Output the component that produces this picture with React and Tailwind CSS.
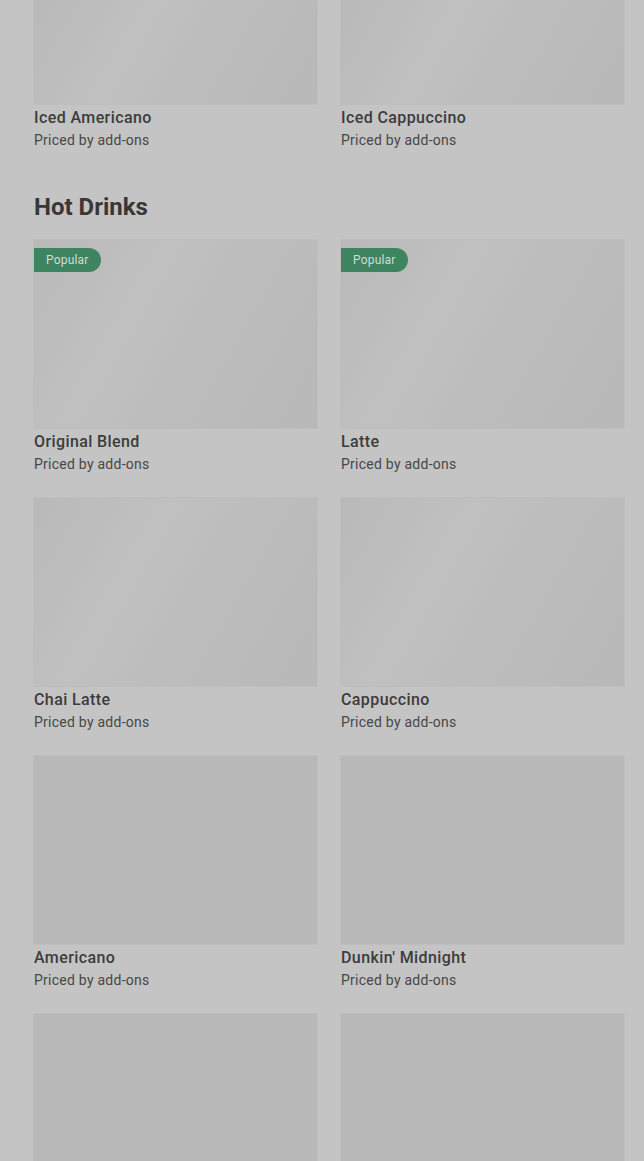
import React from "react";

const shimmer =
  "bg-[linear-gradient(120deg,#b9b9b9_0%,#c0c0c0_35%,#bdbdbd_55%,#b8b8b8_100%)]";

function Card({ title, popular, flat, imgH = "h-[188px]" }) {
  return (
    <div className="flex flex-col">
      <div
        className={`relative ${imgH} w-full ${flat ? "bg-[#b8b8b8]" : shimmer} shadow-[0_0_0_1px_rgba(180,180,180,0.35)]`}
      >
        {popular && (
          <div className="absolute left-0 top-2 flex h-6 items-center rounded-r-full bg-[#3f8461] pl-3 pr-3 text-[12px] tracking-[0.2px] text-[#cfdcd5]">
            Popular
          </div>
        )}
      </div>
      {title && (
        <>
          <div className="mt-0.5 text-[16px] leading-6 font-medium tracking-[0.4px] text-[#3c3c3c]">{title}</div>
          <div className="text-[14px] leading-5 tracking-[0.25px] text-[#474747]">Priced by add-ons</div>
        </>
      )}
    </div>
  );
}

export default function App() {
  return (
    <div
      className="h-[1161px] overflow-hidden bg-[#c4c4c4] pl-[34px] pr-[20px]"
      style={{ fontFamily: "Roboto, 'Liberation Sans', sans-serif" }}
    >
      <div className="grid grid-cols-2 gap-x-6">
        <Card title="Iced Americano" imgH="h-[104px]" />
        <Card title="Iced Cappuccino" imgH="h-[104px]" />
      </div>
      <h2 className="mt-[43px] mb-[19px] text-[24px] leading-7 font-bold text-[#383838]">
        Hot Drinks
      </h2>
      <div className="grid grid-cols-2 gap-x-6 gap-y-6">
        <Card title="Original Blend" popular />
        <Card title="Latte" popular />
        <Card title="Chai Latte" />
        <Card title="Cappuccino" />
        <Card title="Americano" flat />
        <Card title="Dunkin' Midnight" flat />
        <Card flat />
        <Card flat />
      </div>
    </div>
  );
}
